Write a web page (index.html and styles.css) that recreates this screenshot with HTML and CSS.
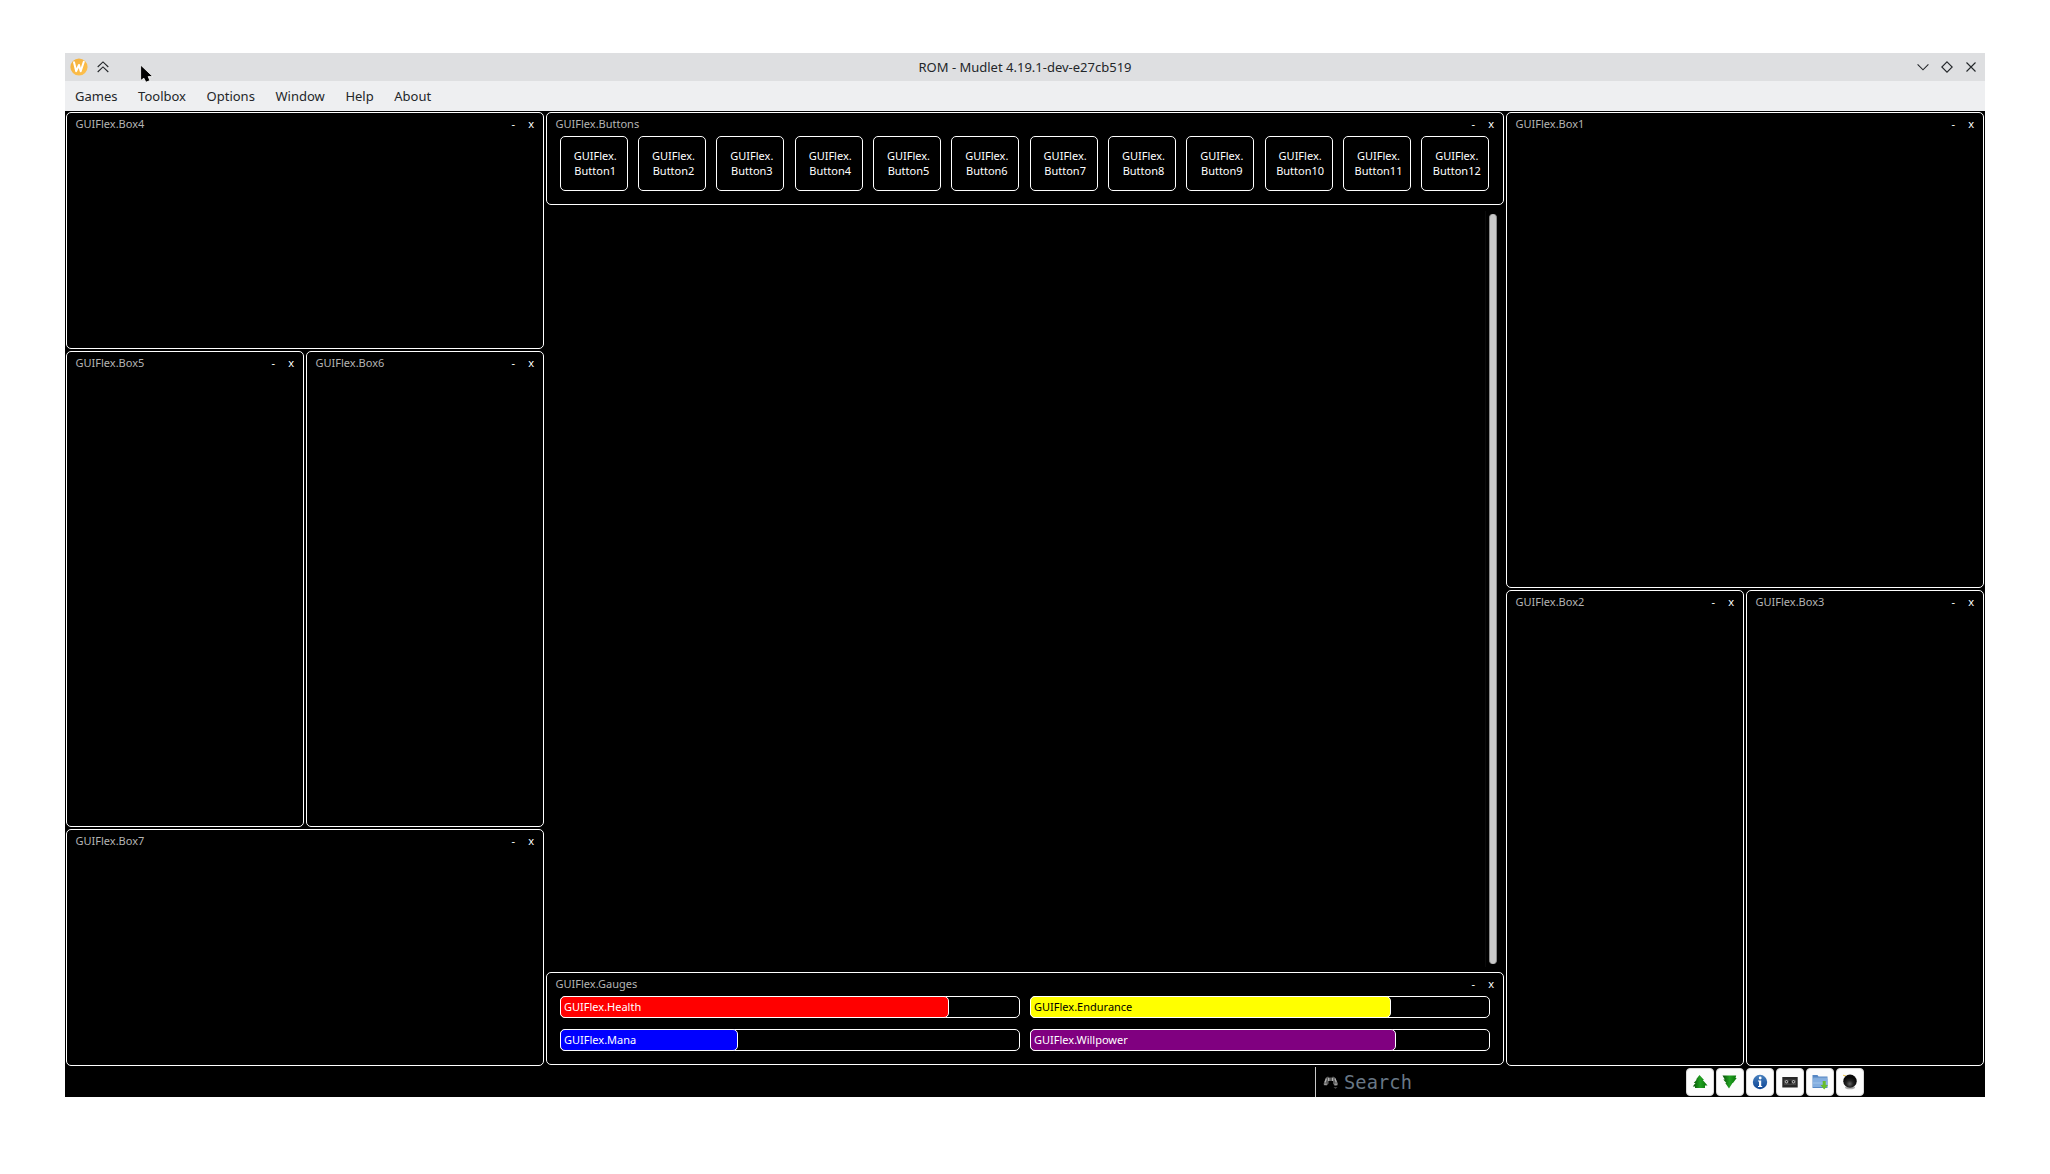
FILE: index.html
```html
<!DOCTYPE html>
<html lang="en">
<head>
<meta charset="utf-8">
<title>ROM - Mudlet 4.19.1-dev-e27cb519</title>
<link rel="stylesheet" href="styles.css">
</head>
<body>
<div class="window">
  <header class="titlebar">
    <div class="title-left">
      <svg width="18" height="18" viewBox="0 0 18 18"><defs><linearGradient id="wl" x1="0" y1="0" x2="1" y2="1"><stop offset="0" stop-color="#f3b03c"/><stop offset="1" stop-color="#ffc24f"/></linearGradient></defs><circle cx="9" cy="9" r="8.6" fill="url(#wl)"/><path d="M4 4.200 6.200 13.200 9 7 10.700 13.200 13.800 3.800" fill="none" stroke="#fff" stroke-width="2" stroke-linejoin="round" stroke-linecap="round"/></svg>
      <svg class="shade" width="12" height="12" viewBox="0 0 12 12"><path d="M.7 6 6 .9 11.3 6M.7 11 6 5.9 11.3 11" fill="none" stroke="#232629" stroke-width="1.1"/></svg>
    </div>
    <div class="title">ROM - Mudlet 4.19.1-dev-e27cb519</div>
    <div class="title-right">
      <svg width="12" height="12" viewBox="0 0 12 12"><path d="M.6 3.4 6 8.8l5.4-5.4" fill="none" stroke="#232629" stroke-width="1.1"/></svg>
      <svg width="12" height="12" viewBox="0 0 12 12"><path d="M6 .8 11.2 6 6 11.2.8 6z" fill="none" stroke="#232629" stroke-width="1.1"/></svg>
      <svg width="12" height="12" viewBox="0 0 12 12"><path d="m1.5 1.5 9 9m0-9-9 9" fill="none" stroke="#232629" stroke-width="1.1"/></svg>
    </div>
    <svg class="cursor" width="14" height="20" viewBox="0 0 14 20"><path d="M.6 1v15.600l3.300-2.400 2 4 4-1.600-1.700-4h4.600z" fill="#000" stroke="#fff" stroke-width=".8"/></svg>
  </header>
  <nav class="menu"><span>Games</span><span>Toolbox</span><span>Options</span><span>Window</span><span>Help</span><span>About</span></nav>
  <main class="workspace">
    <section class="left">
      <div class="panel wide"><div class="head"><span>GUIFlex.Box4</span><b>-</b><i>x</i></div></div>
      <div class="panel"><div class="head"><span>GUIFlex.Box5</span><b>-</b><i>x</i></div></div>
      <div class="panel"><div class="head"><span>GUIFlex.Box6</span><b>-</b><i>x</i></div></div>
      <div class="panel wide"><div class="head"><span>GUIFlex.Box7</span><b>-</b><i>x</i></div></div>
    </section>
    <section class="center">
      <div class="panel">
        <div class="head"><span>GUIFlex.Buttons</span><b>-</b><i>x</i></div>
        <div class="buttons">
          <div class="btn">GUIFlex.<br>Button1</div><div class="btn">GUIFlex.<br>Button2</div><div class="btn">GUIFlex.<br>Button3</div><div class="btn">GUIFlex.<br>Button4</div><div class="btn">GUIFlex.<br>Button5</div><div class="btn">GUIFlex.<br>Button6</div><div class="btn">GUIFlex.<br>Button7</div><div class="btn">GUIFlex.<br>Button8</div><div class="btn">GUIFlex.<br>Button9</div><div class="btn">GUIFlex.<br>Button10</div><div class="btn">GUIFlex.<br>Button11</div><div class="btn">GUIFlex.<br>Button12</div>
        </div>
      </div>
      <div class="console"><div class="track"><div class="thumb"></div></div></div>
      <div class="panel">
        <div class="head"><span>GUIFlex.Gauges</span><b>-</b><i>x</i></div>
        <div class="gauges">
          <div class="gauge"><div class="fill health" style="width:389px">GUIFlex.Health</div></div>
          <div class="gauge"><div class="fill endurance" style="width:361px">GUIFlex.Endurance</div></div>
          <div class="gauge"><div class="fill mana" style="width:178px">GUIFlex.Mana</div></div>
          <div class="gauge"><div class="fill willpower" style="width:366px">GUIFlex.Willpower</div></div>
        </div>
      </div>
    </section>
    <section class="right">
      <div class="panel wide"><div class="head"><span>GUIFlex.Box1</span><b>-</b><i>x</i></div></div>
      <div class="panel"><div class="head"><span>GUIFlex.Box2</span><b>-</b><i>x</i></div></div>
      <div class="panel"><div class="head"><span>GUIFlex.Box3</span><b>-</b><i>x</i></div></div>
    </section>
  </main>
  <footer class="bottom">
    <div class="search">
      <svg width="16" height="15" viewBox="0 0 16 15"><path d="M.6 8.500 3 2.600 5 1.400l1.200 1.200h2.600L10 1.400l2 1.200 3 5.900-.6 2-2.600.4-1.800-2.400V6L8.600 6H6.500L5.600 6v2.500L3.800 10.500.9 10.200z" fill="#5c5c5c"/><path d="M3.400 3.500 2 7.500M12 3.500 13.300 7.500M5.700 3v3M9.600 3v3" stroke="#b4b4b4" stroke-width="1.200"/><path d="M1.200 9.200h2.600M11.400 9.200h2.800" stroke="#999" stroke-width="1.500"/><path d="M10.500 12h4l-2 2z" fill="#444"/></svg>
      <span>Search</span>
    </div>
    <div class="tools">
      <div class="tool"><svg width="16" height="16" viewBox="0 0 16 16"><defs><linearGradient id="g"><stop offset="0" stop-color="#064f06"/><stop offset=".5" stop-color="#20a020"/><stop offset="1" stop-color="#087408"/></linearGradient></defs><path d="M7.500 1 12 6h-1.200l4.700 5.500H13V14H3v-1.500H.8L3.500 9H1.800l3-3.500H4z" fill="url(#g)"/></svg></div>
      <div class="tool"><svg width="16" height="16" viewBox="0 0 16 16"><path d="M.5 1.500h13.700L13.500 4h1.200L11 9h-.5L7 14.500 3.300 9h1L1.300 5.500h1.500z" fill="url(#g)"/></svg></div>
      <div class="tool"><svg width="16" height="16" viewBox="0 0 16 16"><defs><linearGradient id="b" x2="0" y2="1"><stop offset="0" stop-color="#4880bd"/><stop offset="1" stop-color="#0d4595"/></linearGradient></defs><circle cx="8" cy="8" r="7.200" fill="url(#b)"/><circle cx="8.200" cy="4" r="1.400" fill="#fff"/><path d="M6 6.400h3.200V12h1v1H6v-1h1V7.400H6z" fill="#fff"/></svg></div>
      <div class="tool"><svg width="16" height="16" viewBox="0 0 16 16"><path d="M.3 3h15.400v10.500H.3z" fill="#272727"/><path d="M2 5.500h12V11H2z" fill="#444"/><path d="M6.500 6.500h3v3h-3z" fill="#181818"/><circle cx="4.500" cy="7.700" r="1.200" fill="#222" stroke="#ddd" stroke-width=".8"/><circle cx="11.500" cy="7.700" r="1.200" fill="#222" stroke="#ddd" stroke-width=".8"/></svg></div>
      <div class="tool"><svg width="16" height="16" viewBox="0 0 16 16"><path d="M.5 1h5l1 1.500H15.500v11.500H.5z" fill="#5687c4"/><path d="M1 5h14.500v8H1z" fill="#83aee0"/><path d="M1.200 4.200H15M1 9h14" stroke="#a9caee" stroke-width=".8"/><path d="M10.700 7h3v4H16l-3.800 4.600L8.500 11h2.200z" fill="#67bd2d"/></svg></div>
      <div class="tool"><svg width="16" height="16" viewBox="0 0 16 16"><defs><radialGradient id="k" cx=".48" cy=".7" r=".5"><stop offset="0" stop-color="#666"/><stop offset=".5" stop-color="#222"/><stop offset="1" stop-color="#080808"/></radialGradient></defs><ellipse cx="8" cy="13.500" rx="5" ry="1.800" fill="#aaa"/><path d="M1 1.200 4 2" stroke="#e6c451"/><ellipse cx="8" cy="7.200" rx="6.700" ry="6.600" fill="url(#k)"/></svg></div>
    </div>
  </footer>
</div>
</body>
</html>
```
FILE: styles.css
```css
* { box-sizing: border-box; }
body {
  margin: 0;
  padding: 53px 65px 0;
  background: #fff;
  font-family: "Noto Sans", sans-serif;
}
svg { display: block; }
.window { width: 1920px; height: 1044px; background: #000; }
.titlebar {
  position: relative;
  display: grid;
  grid-template-columns: 1fr auto 1fr;
  align-items: center;
  height: 28px;
  padding: 0 8px 0 5px;
  background: #dedfe1;
  color: #232629;
}
.title { font-size: 13px; line-height: 18px; padding-left: 3px; }
.title-left { display: flex; align-items: center; gap: 9px; }
.title-right { display: flex; justify-content: flex-end; gap: 12px; }
.cursor { position: absolute; left: 75px; top: 11px; }
.menu {
  display: flex;
  height: 30px;
  padding-left: 10px;
  background: #eeeff1;
  color: #232629;
  font-size: 13px;
  line-height: 30px;
}
.menu span { margin-right: 20.6px; }
.workspace { display: grid; grid-template-columns: 480px 960px 480px; height: 956px; }
.left { display: grid; grid-template: 239px 478px 239px / 240px 240px; }
.right { display: grid; grid-template: 478px 478px / 240px 240px; }
.center { display: grid; grid-template-rows: 95px 765px 95px; }
.wide { grid-column: span 2; }
.panel { margin: 1px; border: 1px solid #fff; border-radius: 5px; min-width: 0; }
.head {
  display: flex;
  height: 23px;
  padding: 0 9px 0 8.5px;
  color: #b4b4b4;
  font-size: 11px;
  line-height: 22px;
}
.head span { flex: 1; }
.head b, .head i { width: 18px; font-style: normal; font-weight: 400; color: #fff; text-align: right; }
.head b { padding-right: 1px; }
.buttons { display: flex; gap: 10.333px; padding-left: 12.7px; }
.btn {
  flex: none;
  width: 68px;
  height: 55px;
  padding: 11px 0 0 3px;
  border: 1px solid #fff;
  border-radius: 5px;
  color: #fff;
  font-size: 11px;
  line-height: 15px;
  text-align: center;
}
.console { display: flex; justify-content: flex-end; padding: 5px 8px 4px 0; }
.track { width: 12px; padding: 3px 0 3px 3px; border-left: 1px solid #0b0b0b; }
.thumb { height: 100%; border: solid #8a8a8a; border-width: 0 .5px; border-radius: 4px; background: #c9c9c9; }
.gauges { display: grid; grid-template-columns: 460px 460px; gap: 11px 10px; padding-left: 13px; }
.gauge { height: 22px; border: 1px solid #fff; border-radius: 5px; }
.fill {
  height: 22px;
  margin: -1px;
  padding-left: 3px;
  border: 1px solid #fff;
  border-radius: 5px;
  color: #fff;
  font-size: 11px;
  line-height: 20px;
}
.health { background: #f00; }
.endurance { background: #ff0; color: #000; }
.mana { background: #00f; }
.willpower { background: #800080; }
.bottom { display: flex; height: 30px; padding-left: 1250px; }
.search {
  display: flex;
  width: 371px;
  height: 30px;
  padding: 4px 0 0 7px;
  border-left: 1px solid #c8c8c8;
  color: #687786;
  font: 18.667px/24px "DejaVu Sans Mono", monospace;
  letter-spacing: .1px;
}
.search svg { margin-top: 4px; }
.search span { margin-left: 5px; }
.tools { display: flex; gap: 2px; padding-top: 1px; }
.tool {
  display: flex;
  align-items: center;
  justify-content: center;
  width: 28px;
  height: 28px;
  border: 1px solid #d8d8d8;
  border-radius: 4px;
  background: #fcfcfc;
}
```
